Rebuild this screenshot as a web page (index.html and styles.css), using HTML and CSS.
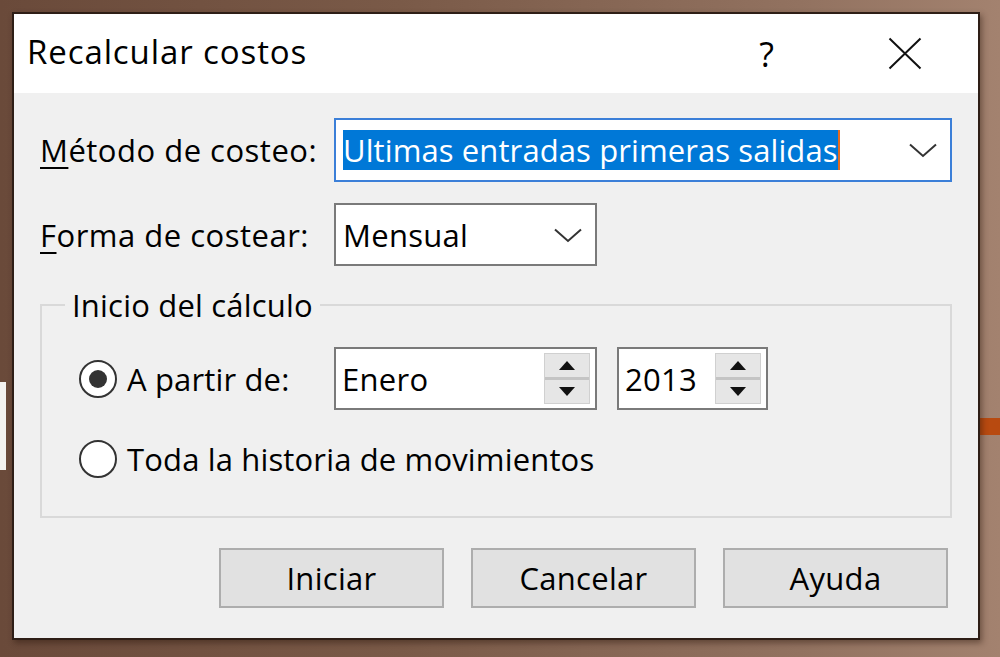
FILE: index.html
```html
<!DOCTYPE html>
<html lang="es">
<head>
<meta charset="utf-8">
<title>Recalcular costos</title>
<link rel="stylesheet" href="styles.css">
</head>
<body>
<div class="bg-patch"></div>
<div class="bg-bar"></div>
<div class="dialog">
  <div class="titlebar">
    <span class="title">Recalcular costos</span>
    <span class="help">?</span>
    <span class="close">
      <svg width="34" height="33" viewBox="0 0 34 33"><path d="M1.5 1.5 L32.5 31.5 M32.5 1.5 L1.5 31.5" stroke="#111" stroke-width="2" fill="none"/></svg>
    </span>
  </div>
  <div class="client">
    <div class="form">
      <label class="lbl"><u>M</u>étodo de costeo:</label>
      <div class="combo focused">
        <span class="sel">Ultimas entradas primeras salidas</span>
        <svg class="chev" width="30" height="16" viewBox="0 0 30 16"><path d="M2 2.5 L15 14 L28 2.5" stroke="#333" stroke-width="2" fill="none"/></svg>
      </div>
      <label class="lbl"><u>F</u>orma de costear:</label>
      <div class="combo short">
        <span class="val">Mensual</span>
        <svg class="chev" width="30" height="16" viewBox="0 0 30 16"><path d="M2 2.5 L15 14 L28 2.5" stroke="#333" stroke-width="2" fill="none"/></svg>
      </div>
    </div>
    <fieldset class="group">
      <legend>Inicio del cálculo</legend>
      <div class="grow first">
        <div class="opt"><span class="radio on"></span><span class="rlabel">A partir de:</span></div>
        <div class="spin month">
          <span class="val">Enero</span>
          <div class="arrows">
            <div class="arr"><svg width="16" height="9" viewBox="0 0 16 9"><path d="M8 0 L16 9 L0 9 Z" fill="#111"/></svg></div>
            <div class="arr"><svg width="16" height="9" viewBox="0 0 16 9"><path d="M0 0 L16 0 L8 9 Z" fill="#111"/></svg></div>
          </div>
        </div>
        <div class="spin year">
          <span class="val">2013</span>
          <div class="arrows">
            <div class="arr"><svg width="16" height="9" viewBox="0 0 16 9"><path d="M8 0 L16 9 L0 9 Z" fill="#111"/></svg></div>
            <div class="arr"><svg width="16" height="9" viewBox="0 0 16 9"><path d="M0 0 L16 0 L8 9 Z" fill="#111"/></svg></div>
          </div>
        </div>
      </div>
      <div class="grow second">
        <div class="opt"><span class="radio"></span><span class="rlabel">Toda la historia de movimientos</span></div>
      </div>
    </fieldset>
    <div class="buttons">
      <button class="btn">Iniciar</button>
      <button class="btn">Cancelar</button>
      <button class="btn">Ayuda</button>
    </div>
  </div>
</div>
</body>
</html>
```
FILE: styles.css
```css
* { box-sizing: border-box; }
html, body { margin: 0; height: 100%; }
body {
  position: relative;
  overflow: hidden;
  padding: 12px 0 0 12px;
  background: linear-gradient(90deg, #6a4a3a 0%, #7a5a48 40%, #927260 80%, #a3826f 100%);
  font-family: "Open Sans", "Noto Sans", sans-serif;
  font-size: 31px;
  letter-spacing: 0.3px;
  color: #000;
}
.bg-patch {
  position: absolute;
  left: 0; top: 382px;
  width: 6px; height: 88px;
  background: #f4f2f0;
}
.bg-bar {
  position: absolute;
  right: 0; top: 418px;
  width: 20px; height: 17px;
  background: #b84a10;
}
.dialog {
  position: relative;
  width: 968px;
  height: 628px;
  border: 2px solid #2e1e16;
  background: #f0f0f0;
  box-shadow: 2px 3px 6px rgba(40, 20, 10, 0.45);
  display: flex;
  flex-direction: column;
}
.titlebar {
  height: 79px;
  flex: none;
  background: #fff;
  display: flex;
  align-items: center;
  padding: 0 56px 0 13px;
}
.title {
  font-size: 33px;
  letter-spacing: 0.9px;
  margin-top: -4px;
}
.help {
  margin-left: auto;
  font-size: 34px;
  margin-right: 114px;
  margin-top: 0;
  letter-spacing: 0;
}
.close { display: flex; }
.client {
  flex: 1;
  padding: 25px 26px 30px 26px;
  display: flex;
  flex-direction: column;
}
.form {
  display: grid;
  grid-template-columns: 294px 1fr;
  grid-template-rows: 64px 63px;
  row-gap: 21px;
  align-items: center;
}
.lbl { white-space: nowrap; letter-spacing: 0.5px; }
.lbl u { text-decoration-thickness: 2px; text-underline-offset: 5px; }
.combo {
  height: 100%;
  background: #fff;
  border: 2px solid #7a7a7a;
  display: flex;
  align-items: center;
  padding: 0 12px 0 7px;
}
.combo.focused { border-color: #3b7fd8; }
.combo.short { width: 263px; }
.sel {
  background: #0078d7;
  color: #fff;
  height: 40px;
  line-height: 40px;
  border-right: 2px solid #e26a20;
  white-space: nowrap;
  letter-spacing: 0.1px;
}
.chev { margin-left: auto; }
.val { white-space: nowrap; }
.group {
  margin: 19px 0 0 0;
  padding: 22px 0 34px 0;
  border: 2px solid #d9d9d9;
  height: 233px;
}
.group legend {
  margin-left: 23px;
  padding: 0 7px;
  line-height: 40px;
  letter-spacing: 0.2px;
}
.grow {
  display: flex;
  align-items: center;
  padding-left: 37px;
}
.grow.first { height: 63px; }
.grow.second { height: 42px; margin-top: 28px; }
.opt {
  width: 255px;
  display: flex;
  align-items: center;
  flex: none;
}
.radio {
  width: 38px;
  height: 38px;
  border-radius: 50%;
  border: 2.5px solid #333;
  background: #fff;
  flex: none;
  display: flex;
  align-items: center;
  justify-content: center;
}
.radio.on::after {
  content: "";
  width: 18px;
  height: 18px;
  border-radius: 50%;
  background: #333;
}
.rlabel { margin-left: 10px; white-space: nowrap; letter-spacing: 0.15px; }
.spin {
  height: 63px;
  background: #fff;
  border: 2px solid #7a7a7a;
  display: flex;
  align-items: center;
  padding: 4px 5px 4px 6px;
}
.spin.month { width: 263px; }
.spin.year { width: 151px; margin-left: 20px; }
.arrows {
  margin-left: auto;
  width: 46px;
  height: 51px;
  display: flex;
  flex-direction: column;
  border: 1px solid #d0d0d0;
  background: #e6e6e6;
}
.arr {
  flex: 1;
  display: flex;
  align-items: center;
  justify-content: center;
}
.arr + .arr { border-top: 3px solid #c4c4c4; }
.buttons {
  margin-top: 30px;
  display: flex;
  justify-content: flex-end;
  gap: 27px;
  padding-right: 4px;
}
.btn {
  width: 225px;
  height: 60px;
  background: #e1e1e1;
  border: 2px solid #adadad;
  font: inherit;
  letter-spacing: 0.3px;
  color: #000;
  padding: 0;
}
```
